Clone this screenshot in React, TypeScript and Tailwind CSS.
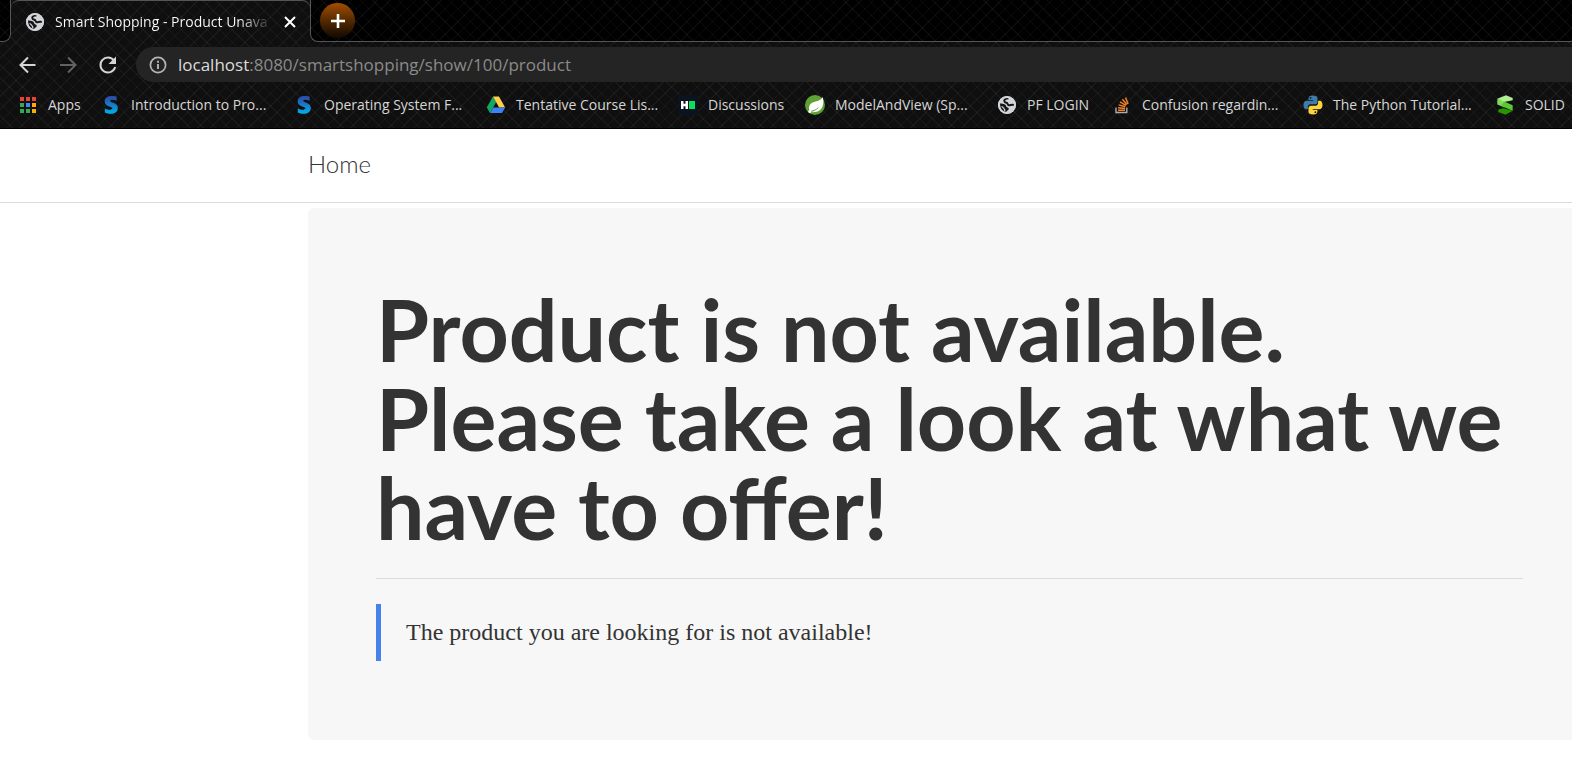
import React from "react";

type IconProps = { className?: string };

const Globe = ({ className = "size-[18px]" }: IconProps) => (
  <svg viewBox="0 0 18 18" className={`${className} shrink-0`} aria-hidden="true">
    <circle cx="9" cy="9" r="9" fill="#d2d4d7" />
    <path d="M10.500 2.300C8 2.600 6.200 3.600 6.300 5c.1 1.500 1.500 1.600 2.600 2 .9.400.5 1.600 1.500 2.100 1.500.6 2.700-.7 5.500-.1" fill="none" stroke="#161616" strokeWidth="2" />
    <path d="M2 7c1.400.9 3.500.6 5 1.500 1.500.9.9 2 2 2.800.9.600 2 .5 1.800 1.700-.3 1.400-1.900 1.300-2.700 3.100C4.500 16 1.500 12.500 2 7z" fill="#161616" />
    <path d="M3.500 10.500c1.200.2 1.700 1.200 2.500 2.200.6.700.9 1.300.8 2.500" fill="none" stroke="#d2d4d7" strokeWidth="1.200" />
    <circle cx="9" cy="9" r="8" fill="none" stroke="#d2d4d7" strokeWidth="2" />
  </svg>
);

const AppsGrid = () => (
  <svg viewBox="0 0 18 18" className="size-[18px] shrink-0" aria-hidden="true">
    <path fill="#ea4335" d="M1 1h4v4H1zM7 1h4v4H7zM13 1h4v4h-4z" />
    <path fill="#34a853" d="M1 7h4v4H1zM1 13h4v4H1zM7 13h4v4H7z" />
    <path fill="#4285f4" d="M7 7h4v4H7z" />
    <path fill="#fbab05" d="M13 7h4v4h-4zM13 13h4v4h-4z" />
  </svg>
);

const BlueS = () => (
  <svg viewBox="0 0 20 20" className="size-5 shrink-0" aria-hidden="true">
    <defs>
      <linearGradient id="blue-s" x1="0" y1="0" x2="0" y2="1">
        <stop offset="0" stopColor="#2f46a8" />
        <stop offset="1" stopColor="#00b1e8" />
      </linearGradient>
    </defs>
    <path fill="url(#blue-s)" d="M15.600 1.500v4.200c-1.500-.7-3-1-4.400-1-1.300 0-2 .4-2 1.100 0 2 7.600 1.500 7.600 7.200 0 3.700-3 5.800-7.200 5.800-2.100 0-4.100-.4-5.800-1.300v-4.300c1.700 1 3.700 1.600 5.400 1.600 1.400 0 2.200-.4 2.200-1.200 0-2.200-7.700-1.500-7.700-7.300C3.700 3 6.400 1 10.600 1c1.800 0 3.400.1 5 .5z" />
  </svg>
);

const Drive = () => (
  <svg viewBox="0 0 20 20" className="size-5 shrink-0" aria-hidden="true">
    <path fill="#11a861" d="M7 1.500 10.200 7 4 18 .8 12.500z" />
    <path fill="#ffcf48" d="M7 1.500h6l6.200 11h-6z" />
    <path fill="#3b82f6" d="M7.200 12.500h12L16 18H4z" />
  </svg>
);

const Hacker = () => (
  <svg viewBox="0 0 20 20" className="size-5 shrink-0" aria-hidden="true">
    <path fill="#0b1220" d="M0 0h20v20H0z" />
    <path fill="#fff" d="M3 6h2.500v2.800h2V6H10v8H7.500v-2.800h-2V14H3z" />
    <path fill="#05e35e" d="M11 6h6v8h-6z" />
  </svg>
);

const Spring = () => (
  <svg viewBox="0 0 20 20" className="size-5 shrink-0" aria-hidden="true">
    <circle cx="10" cy="10" r="10" fill="#5fa134" />
    <path fill="#fff" d="M17.700 2c1 3.600 1.100 8-1 11.200-2.600 3.700-7.200 4.300-11.200 3.900 3.300-.7 6.900-2.300 8.800-5.600-2.800 2.900-6.200 4-9.400 4.600-1.800-3-.7-6.700 2.200-8.400C10.400 6.200 15.500 6.300 17.700 2z" />
    <circle cx="4.800" cy="16.400" r="1.500" fill="#fff" />
  </svg>
);

const StackOverflow = () => (
  <svg viewBox="0 0 20 20" className="size-5 shrink-0" aria-hidden="true">
    <path fill="none" stroke="#a9adb2" strokeWidth="1.400" d="M4 12.500v5h10.800v-5" />
    <path fill="none" stroke="#f48024" strokeWidth="1.500" d="M6 15.200h7M6 12.700l7 .7M6.600 9.900l6.700 1.900M8 6.900l6 3.500M10.400 4.200l4.500 5.300M13.500 2.500l2.600 6.400" />
  </svg>
);

const Python = () => (
  <svg viewBox="0 0 20 20" className="size-5 shrink-0" aria-hidden="true">
    <path fill="#3f7cac" d="M9.900.5C6.700.5 5.600 1.600 5.600 3.200V5h4.600v.8H3.700C1.500 5.800.5 7.500.5 10s1 4.200 2.700 4.200h1.700V12c0-1.500 1.200-2.800 2.700-2.800h4.600c1.300 0 2.300-1 2.300-2.300V3.200C14.500 1.500 13 .5 9.900.5z" />
    <circle cx="7.600" cy="2.800" r=".9" fill="#121212" />
    <path fill="#ffd43b" d="M10.100 19.500c3.200 0 4.300-1.100 4.300-2.700V15H9.800v-.8h6.500c2.200 0 3.200-1.700 3.200-4.200s-1-4.200-2.700-4.200h-1.700V8c0 1.500-1.200 2.800-2.700 2.800H7.800c-1.300 0-2.300 1-2.300 2.300v3.700c0 1.700 1.500 2.700 4.600 2.700z" />
    <circle cx="12.400" cy="17.200" r=".9" fill="#121212" />
  </svg>
);

const GreenS = () => (
  <svg viewBox="0 0 20 20" className="size-5 shrink-0" aria-hidden="true">
    <path fill="#7fdc58" d="M2.300 3.700 9.100 6.500v5.700l-6.800-2.800z" />
    <path fill="#b0ef92" d="M2.300 3.700 11 .3l6.700 2.600v2.400L9.100 7z" />
    <path fill="#5cc934" d="m9.100 6.500 8.600 3.800v5.400l-6-2.400-5.700-2.300z" />
    <path fill="#2b9500" d="m3.300 14.400 5.300-1.200 9.100 2.500-7.200 4L3.300 17z" />
  </svg>
);

const bookmarks = [
  { icon: <AppsGrid />, label: "Apps", width: "w-[83px]" },
  { icon: <BlueS />, label: "Introduction to Pro...", width: "w-[193px]" },
  { icon: <BlueS />, label: "Operating System F...", width: "w-[192px]" },
  { icon: <Drive />, label: "Tentative Course Lis...", width: "w-[192px]" },
  { icon: <Hacker />, label: "Discussions", width: "w-[127px]" },
  { icon: <Spring />, label: "ModelAndView (Sp...", width: "w-[192px]" },
  { icon: <Globe />, label: "PF LOGIN", width: "w-[115px]" },
  { icon: <StackOverflow />, label: "Confusion regardin...", width: "w-[191px]" },
  { icon: <Python />, label: "The Python Tutorial...", width: "w-[192px]" },
  { icon: <GreenS />, label: "SOLID", width: "w-[90px]" },
];

const hatch =
  "bg-[repeating-linear-gradient(45deg,#ffffff0b_0_1px,transparent_1px_9px),repeating-linear-gradient(-45deg,#ffffff0b_0_1px,transparent_1px_9px)]";

function BrowserChrome() {
  return (
    <header className={`overflow-hidden bg-[#0f0f0f] font-['Open_Sans',sans-serif] ${hatch}`}>
      <div className="flex h-[42px]">
        <div className={`w-[11px] shrink-0 rounded-br-lg border-r border-b border-[#555] bg-black ${hatch}`} />
        <div className="flex w-[299px] shrink-0 items-center rounded-t-lg border-t border-[#555] pr-[14px] pl-[15px]">
          <Globe />
          <span className="ml-[11px] flex-1 overflow-hidden bg-linear-to-r from-white from-85% to-transparent bg-clip-text text-sm whitespace-nowrap text-transparent">
            Smart Shopping - Product Unava
          </span>
          <button type="button" aria-label="Close tab" className="ml-3 text-white">
            <svg viewBox="0 0 12 12" className="size-3" aria-hidden="true">
              <path d="m1 1 10 10M11 1 1 11" stroke="currentColor" strokeWidth="2" />
            </svg>
          </button>
        </div>
        <div className={`flex flex-1 items-center rounded-bl-lg border-b border-l border-[#555] bg-black pl-[9px] ${hatch}`}>
          <button
            type="button"
            aria-label="New tab"
            className="flex size-[35px] items-center justify-center rounded-full bg-linear-to-b from-[#a34e00] to-[#130900] text-white"
          >
            <svg viewBox="0 0 16 16" className="size-4" aria-hidden="true">
              <path d="M8 1v14M1 8h14" stroke="currentColor" strokeWidth="2.600" />
            </svg>
          </button>
        </div>
      </div>

      <div className="flex h-[45px] items-center gap-4 pl-4">
        <button type="button" aria-label="Back" className="text-[#d5d5d5]">
          <svg viewBox="0 0 24 24" className="size-6" aria-hidden="true">
            <path d="M19.500 12H5M12 4.500 4.500 12l7.500 7.500" fill="none" stroke="currentColor" strokeWidth="2" />
          </svg>
        </button>
        <button type="button" aria-label="Forward" className="text-[#626262]">
          <svg viewBox="0 0 24 24" className="size-6" aria-hidden="true">
            <path d="M4 12h15M12 4.500l7.500 7.500-7.500 7.500" fill="none" stroke="currentColor" strokeWidth="2" />
          </svg>
        </button>
        <button type="button" aria-label="Reload" className="text-[#d5d5d5]">
          <svg viewBox="0 0 24 24" className="size-6" aria-hidden="true">
            <path d="M18 7.500A7.500 7.500 0 1 0 19.200 14" fill="none" stroke="currentColor" strokeWidth="2" />
            <path d="M20 3.500V11h-7.500z" fill="currentColor" />
          </svg>
        </button>
        <div className="flex h-[35px] flex-1 items-center rounded-l-full bg-[#242424] pl-[13px]">
          <svg viewBox="0 0 18 18" className="size-[18px] text-[#b5b5b5]" aria-hidden="true">
            <circle cx="9" cy="9" r="7.600" fill="none" stroke="currentColor" strokeWidth="1.700" />
            <path d="M9 8v5M9 4.800v1.900" stroke="currentColor" strokeWidth="1.900" />
          </svg>
          <a href="#address" className="ml-[11px] text-[17px] leading-6 text-[#8b8b8b]">
            <span className="text-[#dcdcdc]">localhost</span>:8080/smartshopping/show/100/product
          </a>
        </div>
      </div>

      <nav aria-label="Bookmarks" className="flex h-[42px] items-start border-b border-black pt-[7px] pl-[18px]">
        {bookmarks.map((b, i) => (
          <a key={i} href="#bookmark" className={`flex h-[22px] shrink-0 items-center gap-[10px] text-sm whitespace-nowrap text-[#d6d6d6] ${b.width}`}>
            <span className="flex w-5 justify-center">{b.icon}</span>
            <span>{b.label}</span>
          </a>
        ))}
      </nav>
    </header>
  );
}

export default function App() {
  return (
    <div className="min-h-screen overflow-hidden bg-white text-[#333]">
      <BrowserChrome />
      <nav aria-label="Main" className="flex h-[74px] items-center border-b border-[#dcdcdc] pb-1 pl-[308px] font-['Lato',sans-serif] text-2xl font-light">
        <a href="#home">Home</a>
      </nav>
      <main className="mt-[5px] ml-[308px] rounded-l-md bg-[#f7f7f7] pt-[76px] pr-[49px] pb-[79px] pl-[68px]">
        <h1 className="border-b border-[#dcdcdc] pb-[27px] font-['Lato',sans-serif] text-[86px] leading-[89px] font-bold whitespace-nowrap">
          <span className="block">Product is not available.</span>
          <span className="block">Please take a look at what we</span>
          <span className="block">have to offer!</span>
        </h1>
        <blockquote className="mt-[25px] border-l-5 border-[#4582ec] py-3 pl-[25px] font-['Liberation_Serif',serif] text-2xl leading-[33px]">
          The product you are looking for is not available!
        </blockquote>
      </main>
    </div>
  );
}
